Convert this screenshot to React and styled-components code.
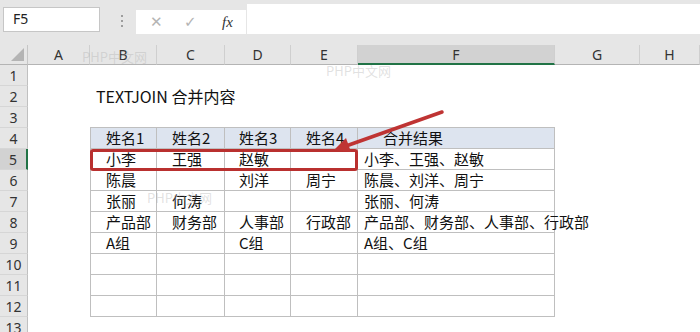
import React from 'react';
import styled, { createGlobalStyle } from 'styled-components';

const Global = createGlobalStyle`
  html, body { margin: 0; padding: 0; background: #fff; overflow: hidden; }
  body { font-family: "Noto Sans", "Noto Sans CJK SC", sans-serif; }
`;

const Page = styled.div`
  width: 700px;
  height: 332px;
  overflow: hidden;
  background: #fff;
`;

const TopBar = styled.div`
  height: 45px;
  background: #e6e6e6;
  display: flex;
  align-items: flex-start;
`;

const NameBox = styled.div`
  margin: 7px 0 0 3px;
  width: 97px;
  height: 25px;
  box-sizing: border-box;
  background: #fff;
  border: 1px solid #c6c6c6;
  font-family: "Noto Sans", sans-serif;
  font-size: 14px;
  line-height: 22px;
  padding-left: 9px;
  color: #222;
`;

const Dots = styled.div`
  margin: 15px 0 0 21px;
  width: 2px;
  display: flex;
  flex-direction: column;
  gap: 3px;
  span { width: 2px; height: 2px; background: #9d9d9d; display: block; }
`;

const FxButtons = styled.div`
  margin: 10px 0 0 13px;
  width: 110px;
  height: 24px;
  background: #fff;
  display: flex;
  align-items: center;
  position: relative;
`;

const FxIcon = styled.span`
  position: absolute;
  left: ${p => p.$x}px;
  top: 2px;
  font-size: ${p => p.$size || 16}px;
  color: ${p => p.$color || '#b4b4b4'};
  font-family: ${p => p.$serif ? '"Liberation Serif", serif' : '"DejaVu Sans", sans-serif'};
  font-style: ${p => p.$serif ? 'italic' : 'normal'};
  line-height: 20px;
`;

const FormulaInput = styled.div`
  flex: 1;
  margin-top: 4px;
  margin-left: 1px;
  height: 30px;
  background: #fff;
`;

const cols = '28px 62px 67px 68px 66px 67px 197px 85px 1fr';

const Sheet = styled.div`
  position: relative;
  display: grid;
  grid-template-columns: ${cols};
  grid-template-rows: 20px;
  grid-auto-rows: 21px;
  background: #fff;
`;

const Corner = styled.div`
  background: #e6e6e6;
  border-right: 1px solid #c6c6c6;
  border-bottom: 1px solid #b4b4b4;
  box-sizing: border-box;
  position: relative;
  &::after {
    content: '';
    position: absolute;
    right: 3px;
    bottom: 3px;
    width: 0;
    height: 0;
    border-left: 13px solid transparent;
    border-bottom: 13px solid #b4b4b4;
  }
`;

const ColHead = styled.div`
  box-sizing: border-box;
  background: ${p => p.$active ? '#d2d2d2' : '#e6e6e6'};
  border-right: 1px solid #cfcfcf;
  border-bottom: ${p => p.$active ? '2px solid #217346' : '1px solid #b4b4b4'};
  font-family: "Noto Sans", sans-serif;
  font-size: 14px;
  color: #333;
  text-align: center;
  line-height: 19px;
`;

const RowHead = styled.div`
  box-sizing: border-box;
  background: ${p => p.$active ? '#d2d2d2' : '#e6e6e6'};
  border-bottom: 1px solid #d6d6d6;
  border-right: ${p => p.$active ? '2px solid #217346' : '1px solid #c0c0c0'};
  font-family: "Noto Sans", sans-serif;
  font-size: 14px;
  color: #333;
  text-align: center;
  line-height: 21px;
`;

const Cell = styled.div`
  box-sizing: border-box;
  white-space: nowrap;
  overflow: visible;
  font-family: "Noto Sans CJK SC", sans-serif;
  font-size: 15px;
  color: #111;
  line-height: 20px;
  padding-left: ${p => p.$pad || 0}px;
  background: ${p => p.$head ? '#dde4ef' : 'transparent'};
  border-right: ${p => p.$table ? '1px solid #bfbfbf' : 'none'};
  border-bottom: ${p => p.$table ? '1px solid #bfbfbf' : 'none'};
  border-left: ${p => p.$first ? '1px solid #bfbfbf' : 'none'};
  border-top: ${p => p.$top ? '1px solid #bfbfbf' : 'none'};
  margin-top: ${p => p.$top ? '-1px' : '0'};
  height: ${p => p.$top ? '22px' : 'auto'};
  position: relative;
  z-index: 1;
`;

const Title = styled.div`
  white-space: nowrap;
  font-family: "Noto Sans CJK SC", sans-serif;
  font-size: 16px;
  color: #111;
  line-height: 21px;
  padding-left: 6px;
  position: relative;
  z-index: 1;
`;

const HighlightBox = styled.div`
  position: absolute;
  left: 90px;
  top: 104px;
  width: 268px;
  height: 22px;
  box-sizing: border-box;
  border: 3px solid #b9302f;
  border-radius: 3px;
  z-index: 3;
`;

const ArrowLayer = styled.svg`
  position: absolute;
  left: 0;
  top: 0;
  width: 700px;
  height: 290px;
  z-index: 4;
  pointer-events: none;
`;

const Watermark = styled.div`
  position: absolute;
  left: ${p => p.$x}px;
  top: ${p => p.$y}px;
  font-family: "Noto Sans CJK SC", sans-serif;
  font-size: 13px;
  color: rgba(170, 170, 170, 0.35);
  white-space: nowrap;
  z-index: 5;
  pointer-events: none;
`;

const letters = ['A', 'B', 'C', 'D', 'E', 'F', 'G', 'H'];

const data = {
  4: ['姓名1', '姓名2', '姓名3', '姓名4', '合并结果'],
  5: ['小李', '王强', '赵敏', '', '小李、王强、赵敏'],
  6: ['陈晨', '', '刘洋', '周宁', '陈晨、刘洋、周宁'],
  7: ['张丽', '何涛', '', '', '张丽、何涛'],
  8: ['产品部', '财务部', '人事部', '行政部', '产品部、财务部、人事部、行政部'],
  9: ['A组', '', 'C组', '', 'A组、C组'],
  10: ['', '', '', '', ''],
  11: ['', '', '', '', ''],
  12: ['', '', '', '', ''],
};

const pads = [15, 15, 14, 15, 6];

export default function App() {
  const rows = [];
  for (let r = 1; r <= 13; r++) {
    rows.push(<RowHead key={`rh${r}`} $active={r === 5}>{r}</RowHead>);
    rows.push(<Cell key={`a${r}`} />);
    if (data[r]) {
      data[r].forEach((v, i) => {
        const head = r === 4;
        const pad = head && i === 4 ? 25 : pads[i];
        rows.push(
          <Cell key={`c${r}-${i}`} $table $head={head} $top={head} $first={i === 0} $pad={pad}>
            {v}
          </Cell>
        );
      });
    } else if (r === 2) {
      rows.push(<Title key="title">TEXTJOIN 合并内容</Title>);
      for (let i = 0; i < 4; i++) rows.push(<Cell key={`c${r}-${i}`} />);
    } else {
      for (let i = 0; i < 5; i++) rows.push(<Cell key={`c${r}-${i}`} />);
    }
    rows.push(<Cell key={`g${r}`} />);
    rows.push(<Cell key={`h${r}`} />);
  }

  return (
    <Page>
      <Global />
      <TopBar>
        <NameBox>F5</NameBox>
        <Dots><span /><span /><span /></Dots>
        <FxButtons>
          <FxIcon $x={14} $size={15}>✕</FxIcon>
          <FxIcon $x={48} $size={15}>✓</FxIcon>
          <FxIcon $x={86} $size={15} $serif $color="#333">fx</FxIcon>
        </FxButtons>
        <FormulaInput />
      </TopBar>
      <Sheet>
        <Corner />
        {letters.map(l => (
          <ColHead key={l} $active={l === 'F'}>{l}</ColHead>
        ))}
        {rows}
        <HighlightBox />
        <ArrowLayer viewBox="0 0 700 290">
          <line x1="442" y1="67" x2="346" y2="101" stroke="#bf3433" strokeWidth="3.5" strokeLinecap="round" />
          <polygon points="334,105 351,107 346,93" fill="#bf3433" />
        </ArrowLayer>
        <Watermark $x={82} $y={2}>PHP中文网</Watermark>
        <Watermark $x={326} $y={16}>PHP中文网</Watermark>
        <Watermark $x={147} $y={143}>PHP中文网</Watermark>
      </Sheet>
    </Page>
  );
}
